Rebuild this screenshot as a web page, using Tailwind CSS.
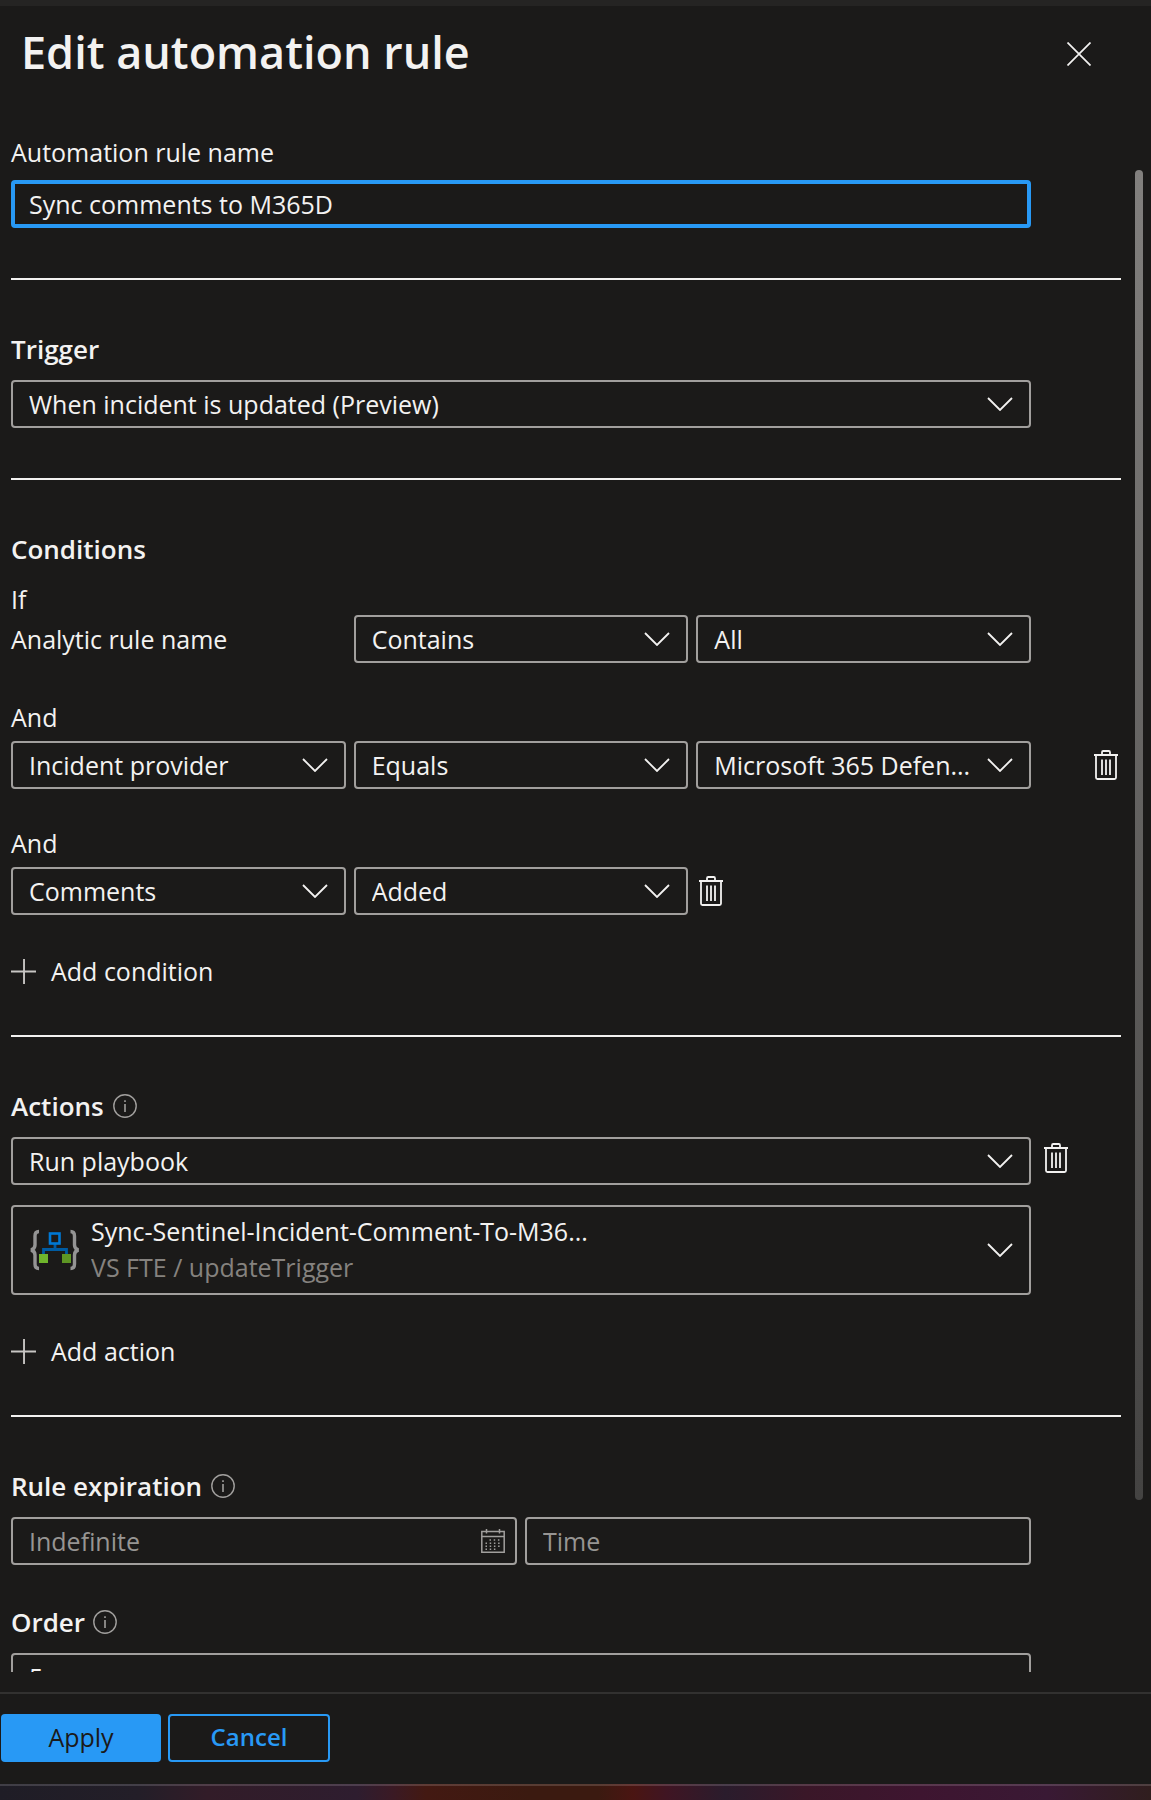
<!DOCTYPE html>
<html lang="en">
<head>
<meta charset="utf-8">
<meta name="viewport" content="width=device-width, initial-scale=1">
<title>Edit automation rule</title>
<script src="https://cdn.jsdelivr.net/npm/@tailwindcss/browser@4"></script>
</head>
<body class="flex h-screen flex-col overflow-hidden bg-[#1b1a19] font-['Open_Sans','Noto_Sans',sans-serif] text-[25px] leading-8 text-[#f3f2f1]">

<svg class="hidden" aria-hidden="true">
  <symbol id="chevron" viewBox="0 0 26 14"><path d="M1 1l12 12L25 1" fill="none" stroke="#f3f2f1" stroke-width="1.8"/></symbol>
  <symbol id="trash" viewBox="0 0 24 30">
    <g fill="none" stroke="#f3f2f1" stroke-width="1.8">
      <path d="M0 5h24M8 5V2.2Q8 1 9.200 1h5.600Q16 1 16 2.200V5M2 5v22.500Q2 29 3.500 29h17Q22 29 22 27.500V5"/>
      <path d="M8 9.500v15.500M12 9.500v15.500M16 9.500v15.500"/>
    </g>
  </symbol>
  <symbol id="info" viewBox="0 0 24 24">
    <circle cx="12" cy="12" r="11.200" fill="none" stroke="#a19f9d" stroke-width="1.400"/>
    <path d="M12 10v8M12 6.200v1.800" stroke="#a19f9d" stroke-width="1.600"/>
  </symbol>
  <symbol id="plus" viewBox="0 0 24 24"><path d="M12.500 0v24M0 12h24" stroke="#c8c6c4" stroke-width="1.800"/></symbol>
</svg>

<header class="flex h-34 shrink-0 items-start justify-between border-t-6 border-[#252423] pt-[14px] pr-14 pl-[21px]">
  <h1 class="text-[45px] leading-16 font-semibold">Edit automation rule</h1>
  <button type="button" aria-label="Close" class="mt-[22px] mr-1"><svg class="size-6" viewBox="0 0 24 24"><path d="M.5.5l23 23M23.500.5l-23 23" stroke="#f3f2f1" stroke-width="1.700"/></svg></button>
</header>

<main class="flex min-h-0 flex-1 gap-[14px] overflow-hidden pr-2 pl-[11px]">
  <form id="rule" class="min-w-0 flex-1">
    <section class="pr-[90px]">
      <label for="name" class="mb-3 block">Automation rule name</label>
      <input id="name" type="text" value="Sync comments to M365D" class="block h-12 w-full rounded-sm border-4 border-[#2899f5] bg-transparent px-[14px] outline-none">
    </section>
    <hr class="mt-[50px] border-t-2 border-[#f3f2f1]">

    <section class="mt-[51px] pr-[90px]">
      <label for="trigger" class="mb-[13px] block text-[26px] leading-9 font-semibold">Trigger</label>
      <div class="grid items-center">
        <select id="trigger" class="col-start-1 row-start-1 h-12 w-full appearance-none rounded-sm border-2 border-[#a19f9d] bg-transparent px-4"><option>When incident is updated (Preview)</option></select>
        <svg class="pointer-events-none col-start-1 row-start-1 mr-[18px] h-[14px] w-[26px] justify-self-end"><use href="#chevron"/></svg>
      </div>
    </section>
    <hr class="mt-[50px] border-t-2 border-[#f3f2f1]">

    <section class="mt-[51px]">
      <h2 class="text-[26px] leading-9 font-semibold">Conditions</h2>
      <p class="mt-4">If</p>
      <div class="mr-[90px] grid grid-cols-3 items-center gap-2">
        <span>Analytic rule name</span>
        <div class="grid items-center">
          <select aria-label="Analytic rule operator" class="col-start-1 row-start-1 h-12 w-full appearance-none rounded-sm border-2 border-[#a19f9d] bg-transparent px-4"><option>Contains</option></select>
          <svg class="pointer-events-none col-start-1 row-start-1 mr-[18px] h-[14px] w-[26px] justify-self-end"><use href="#chevron"/></svg>
        </div>
        <div class="grid items-center">
          <select aria-label="Analytic rule value" class="col-start-1 row-start-1 h-12 w-full appearance-none rounded-sm border-2 border-[#a19f9d] bg-transparent px-4"><option>All</option></select>
          <svg class="pointer-events-none col-start-1 row-start-1 mr-[18px] h-[14px] w-[26px] justify-self-end"><use href="#chevron"/></svg>
        </div>
      </div>

      <p class="mt-[38px] mb-2">And</p>
      <div class="flex items-center justify-between pr-[3px]">
        <div class="grid flex-1 grid-cols-3 gap-2">
          <div class="grid items-center">
            <select aria-label="Condition property" class="col-start-1 row-start-1 h-12 w-full appearance-none rounded-sm border-2 border-[#a19f9d] bg-transparent px-4"><option>Incident provider</option></select>
            <svg class="pointer-events-none col-start-1 row-start-1 mr-[18px] h-[14px] w-[26px] justify-self-end"><use href="#chevron"/></svg>
          </div>
          <div class="grid items-center">
            <select aria-label="Condition operator" class="col-start-1 row-start-1 h-12 w-full appearance-none rounded-sm border-2 border-[#a19f9d] bg-transparent px-4"><option>Equals</option></select>
            <svg class="pointer-events-none col-start-1 row-start-1 mr-[18px] h-[14px] w-[26px] justify-self-end"><use href="#chevron"/></svg>
          </div>
          <div class="grid items-center">
            <select aria-label="Condition value" class="col-start-1 row-start-1 h-12 w-full appearance-none rounded-sm border-2 border-[#a19f9d] bg-transparent px-4"><option>Microsoft 365 Defen...</option></select>
            <svg class="pointer-events-none col-start-1 row-start-1 mr-[18px] h-[14px] w-[26px] justify-self-end"><use href="#chevron"/></svg>
          </div>
        </div>
        <button type="button" aria-label="Delete condition" class="ml-[63px]"><svg class="h-[30px] w-6"><use href="#trash"/></svg></button>
      </div>

      <p class="mt-[38px] mb-2">And</p>
      <div class="mr-[90px] grid grid-cols-3 items-center gap-2">
        <div class="grid items-center">
          <select aria-label="Condition property" class="col-start-1 row-start-1 h-12 w-full appearance-none rounded-sm border-2 border-[#a19f9d] bg-transparent px-4"><option>Comments</option></select>
          <svg class="pointer-events-none col-start-1 row-start-1 mr-[18px] h-[14px] w-[26px] justify-self-end"><use href="#chevron"/></svg>
        </div>
        <div class="grid items-center">
          <select aria-label="Condition operator" class="col-start-1 row-start-1 h-12 w-full appearance-none rounded-sm border-2 border-[#a19f9d] bg-transparent px-4"><option>Added</option></select>
          <svg class="pointer-events-none col-start-1 row-start-1 mr-[18px] h-[14px] w-[26px] justify-self-end"><use href="#chevron"/></svg>
        </div>
        <button type="button" aria-label="Delete condition" class="ml-[3px] justify-self-start"><svg class="h-[30px] w-6"><use href="#trash"/></svg></button>
      </div>

      <button type="button" class="mt-10 flex h-8 items-center gap-[15px]"><svg class="size-[25px]"><use href="#plus"/></svg>Add condition</button>
    </section>
    <hr class="mt-12 border-t-2 border-[#f3f2f1]">

    <section class="mt-[51px]">
      <div class="mb-[13px] flex items-center gap-[9px]">
        <label for="action" class="text-[26px] leading-9 font-semibold">Actions</label>
        <svg class="size-6" role="img" aria-label="Info"><use href="#info"/></svg>
      </div>
      <div class="flex items-center">
        <div class="grid flex-1 items-center">
          <select id="action" class="col-start-1 row-start-1 h-12 w-full appearance-none rounded-sm border-2 border-[#a19f9d] bg-transparent px-4"><option>Run playbook</option></select>
          <svg class="pointer-events-none col-start-1 row-start-1 mr-[18px] h-[14px] w-[26px] justify-self-end"><use href="#chevron"/></svg>
        </div>
        <div class="w-[90px] pb-1.5 pl-[13px]"><button type="button" aria-label="Delete action" class="block"><svg class="h-[30px] w-6"><use href="#trash"/></svg></button></div>
      </div>
      <div class="mt-5 pr-[90px]">
        <button type="button" aria-haspopup="listbox" class="flex h-[90px] w-full items-center rounded-sm border-2 border-[#a19f9d] px-4 text-left leading-9">
          <svg class="h-[42px] w-[52px] shrink-0" viewBox="0 0 52 42" aria-hidden="true">
            <g fill="none" stroke="#949494" stroke-width="3.400">
              <path d="M10 2.500Q6 2.500 6 7v9q0 4-4 5q4 1 4 5v9q0 4.500 4 4.500"/>
              <path d="M41.500 2.500q4 0 4 4.500v9q0 4 4 5q-4 1-4 5v9q0 4.500-4 4.500"/>
            </g>
            <path d="M26 15v5M14.500 26v-5.500h23V26" fill="none" stroke="#005ba1" stroke-width="2.800"/>
            <rect x="21" y="4.500" width="9.500" height="10" fill="none" stroke="#0078d4" stroke-width="2.600"/>
            <rect x="10" y="25" width="9" height="9" fill="#6fb52c"/>
            <rect x="33" y="25" width="9" height="9" fill="#5e9624"/>
          </svg>
          <span class="ml-[10px] flex min-w-0 flex-1 flex-col pb-0.5">
            <span class="truncate">Sync-Sentinel-Incident-Comment-To-M36...</span>
            <span class="truncate text-[#85827f]">VS FTE / updateTrigger</span>
          </span>
          <svg class="h-[14px] w-[26px] shrink-0"><use href="#chevron"/></svg>
        </button>
      </div>
      <button type="button" class="mt-10 flex h-8 items-center gap-[15px]"><svg class="size-[25px]"><use href="#plus"/></svg>Add action</button>
    </section>
    <hr class="mt-12 border-t-2 border-[#f3f2f1]">

    <section class="mt-[51px] pr-[90px]">
      <div class="mb-[13px] flex items-center gap-[9px]">
        <label for="date" class="text-[26px] leading-9 font-semibold">Rule expiration</label>
        <svg class="size-6" role="img" aria-label="Info"><use href="#info"/></svg>
      </div>
      <div class="grid grid-cols-2 gap-2">
        <div class="grid items-center">
          <input id="date" type="text" placeholder="Indefinite" class="col-start-1 row-start-1 h-12 w-full rounded-sm border-2 border-[#a19f9d] bg-transparent px-4 placeholder:text-[#979593]">
          <svg class="pointer-events-none col-start-1 row-start-1 mr-3 size-6 justify-self-end" viewBox="0 0 24 24" aria-hidden="true">
            <path d="M.8 2.500h22.400v20.700H.8zM.8 7.500h22.400M5.500 0v4.500M18.500 0v4.500" fill="none" stroke="#a19f9d" stroke-width="1.500"/>
            <path d="M8.500 11h12M4.500 14.200h16M4.500 17.200h16M4.500 20.200h12" fill="none" stroke="#a19f9d" stroke-width="1.500" stroke-dasharray="1.500 2.700"/>
          </svg>
        </div>
        <input type="text" aria-label="Expiration time" placeholder="Time" class="h-12 w-full rounded-sm border-2 border-[#a19f9d] bg-transparent px-4 placeholder:text-[#979593]">
      </div>
      <div class="mt-[39px] mb-[13px] flex items-center gap-2">
        <label for="order" class="text-[26px] leading-9 font-semibold">Order</label>
        <svg class="size-6" role="img" aria-label="Info"><use href="#info"/></svg>
      </div>
      <input id="order" type="text" value="5" class="block h-12 w-full rounded-sm border-2 border-[#a19f9d] bg-transparent px-4">
    </section>
  </form>
  <!-- scroll thumb -->
  <div class="mt-[34px] h-[1330px] w-2 shrink-0 rounded-full bg-linear-to-b from-[#82807e] to-[#444342]"></div>
</main>

<footer class="mt-5 flex shrink-0 gap-[7px] border-t-2 border-[#323130] pt-5 pb-[22px] pl-px">
  <button type="submit" form="rule" class="h-12 w-40 rounded-sm bg-[#2899f5] pb-0.5 font-medium text-[#1b1a19]">Apply</button>
  <button type="button" class="h-12 w-[162px] rounded-sm border-2 border-[#2899f5] pb-0.5 text-2xl font-semibold text-[#2899f5]">Cancel</button>
</footer>
<div class="h-4 shrink-0 border-t-2 border-white/15 bg-[linear-gradient(90deg,#1f1d26_0%,#231e28_12%,#321c28_18%,#2e1d2f_31%,#3a1a25_34%,#431912_37%,#3b1a10_46%,#3b1a10_52%,#4a1512_55%,#3f1523_58%,#2a1c2c_63%,#3a1728_70%,#3e1530_80%,#391934_91%,#301e1e_100%)]"></div>

</body>
</html>
